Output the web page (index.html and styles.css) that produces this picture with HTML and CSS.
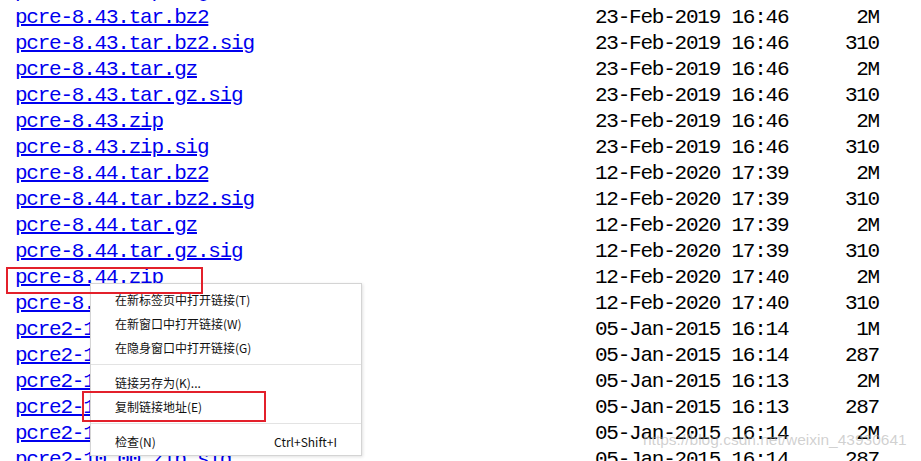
FILE: index.html
```html
<!DOCTYPE html>
<html>
<head>
<meta charset="UTF-8">
<title>Index of /pub/pcre</title>
<link rel="stylesheet" href="styles.css">
</head>
<body>
	<div class="listing">
		<div class="row"><a href="#">pcre-8.42.zip.sig</a><span>20-Mar-2018 17:39</span><span class="size">310</span></div>
		<div class="row"><a href="#">pcre-8.43.tar.bz2</a><span>23-Feb-2019 16:46</span><span class="size">2M</span></div>
		<div class="row"><a href="#">pcre-8.43.tar.bz2.sig</a><span>23-Feb-2019 16:46</span><span class="size">310</span></div>
		<div class="row"><a href="#">pcre-8.43.tar.gz</a><span>23-Feb-2019 16:46</span><span class="size">2M</span></div>
		<div class="row"><a href="#">pcre-8.43.tar.gz.sig</a><span>23-Feb-2019 16:46</span><span class="size">310</span></div>
		<div class="row"><a href="#">pcre-8.43.zip</a><span>23-Feb-2019 16:46</span><span class="size">2M</span></div>
		<div class="row"><a href="#">pcre-8.43.zip.sig</a><span>23-Feb-2019 16:46</span><span class="size">310</span></div>
		<div class="row"><a href="#">pcre-8.44.tar.bz2</a><span>12-Feb-2020 17:39</span><span class="size">2M</span></div>
		<div class="row"><a href="#">pcre-8.44.tar.bz2.sig</a><span>12-Feb-2020 17:39</span><span class="size">310</span></div>
		<div class="row"><a href="#">pcre-8.44.tar.gz</a><span>12-Feb-2020 17:39</span><span class="size">2M</span></div>
		<div class="row"><a href="#">pcre-8.44.tar.gz.sig</a><span>12-Feb-2020 17:39</span><span class="size">310</span></div>
		<div class="row"><a href="#">pcre-8.44.zip</a><span>12-Feb-2020 17:40</span><span class="size">2M</span></div>
		<div class="row"><a href="#">pcre-8.44.zip.sig</a><span>12-Feb-2020 17:40</span><span class="size">310</span></div>
		<div class="row"><a href="#">pcre2-10.00.tar.bz2</a><span>05-Jan-2015 16:14</span><span class="size">1M</span></div>
		<div class="row"><a href="#">pcre2-10.00.tar.bz2.sig</a><span>05-Jan-2015 16:14</span><span class="size">287</span></div>
		<div class="row"><a href="#">pcre2-10.00.tar.gz</a><span>05-Jan-2015 16:13</span><span class="size">2M</span></div>
		<div class="row"><a href="#">pcre2-10.00.tar.gz.sig</a><span>05-Jan-2015 16:13</span><span class="size">287</span></div>
		<div class="row"><a href="#">pcre2-10.00.zip</a><span>05-Jan-2015 16:14</span><span class="size">2M</span></div>
		<div class="row"><a href="#">pcre2-10.00.zip.sig</a><span>05-Jan-2015 16:14</span><span class="size">287</span></div>
	</div>

	<!-- 右键菜单 -->
	<ul class="menu">
		<li class="item">在新标签页中打开链接(T)</li>
		<li class="item">在新窗口中打开链接(W)</li>
		<li class="item">在隐身窗口中打开链接(G)</li>
		<li class="sep"></li>
		<li class="item">链接另存为(K)...</li>
		<li class="item">复制链接地址(E)</li>
		<li class="sep"></li>
		<li class="item"><span>检查(N)</span><span>Ctrl+Shift+I</span></li>
	</ul>

	<!-- 标注框 -->
	<div class="mark mark-file"></div>
	<div class="mark mark-copy"></div>

	<div class="watermark">https://blog.csdn.net/weixin_43930641</div>
</body>
</html>
```

FILE: styles.css
```css
body, ul, li {
	margin: 0;
	padding: 0;
}

body {
	background: #fff;
	overflow: hidden;
}

/* 文件列表 (页面已向下滚动) */
.listing {
	margin: -21px 0 0 15px;
	font-family: "Liberation Mono", monospace;
	font-size: 21px;
	letter-spacing: -1.23px;
	color: #000;
}

.row {
	display: grid;
	grid-template-columns: 580px 193px 91px;
	height: 26px;
	line-height: 26px;
	white-space: pre;
}

.row a {
	color: #0000ee;
	text-decoration: underline;
	text-decoration-thickness: 2px;
}

.size {
	text-align: right;
}

/* 右键菜单 */
.menu {
	position: absolute;
	left: 90px;
	top: 283px;
	width: 270px;
	padding: 4px 0 1px;
	background: #fff;
	border: 1px solid #d4d4d4;
	box-shadow: 1px 1px 3px rgba(0, 0, 0, 0.12);
	list-style: none;
	font-family: "Noto Sans CJK SC", sans-serif;
	font-size: 12px;
	color: #111;
}

.item {
	display: flex;
	justify-content: space-between;
	height: 24px;
	line-height: 24px;
	padding: 0 24px;
}

.sep {
	height: 1px;
	margin: 4px 0 6px;
	background: #e3e3e3;
}

/* 红色标注 */
.mark {
	position: absolute;
	border: 2px solid #e3202b;
}

.mark-file {
	left: 6px;
	top: 267px;
	width: 193px;
	height: 23px;
}

.mark-copy {
	left: 82px;
	top: 391px;
	width: 180px;
	height: 27px;
}

.watermark {
	position: absolute;
	left: 643px;
	top: 431px;
	font-family: "Liberation Sans", sans-serif;
	font-size: 15.5px;
	color: rgba(170, 170, 170, 0.55);
	white-space: nowrap;
}
```
